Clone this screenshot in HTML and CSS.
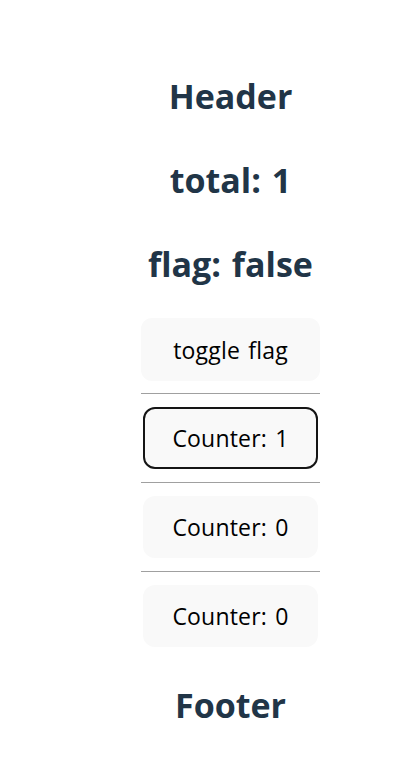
FILE: index.html
```html
<!DOCTYPE html>
<html lang="en">
<head>
<meta charset="utf-8">
<title>Demo</title>
<link rel="stylesheet" href="styles.css">
</head>
<body>
<div class="app">
  <h1 class="title title-header">Header</h1>
  <h1 class="title">total: 1</h1>
  <h1 class="title">flag: false</h1>
  <button class="btn btn-toggle">toggle flag</button>
  <hr class="sep">
  <button class="btn btn-counter is-active">Counter: 1</button>
  <hr class="sep">
  <button class="btn btn-counter">Counter: 0</button>
  <hr class="sep">
  <button class="btn btn-counter">Counter: 0</button>
  <h1 class="title title-footer">Footer</h1>
</div>
</body>
</html>
```
FILE: styles.css
```css
html, body {
  margin: 0;
  padding: 0;
  background: #ffffff;
}
body {
  font-family: "Open Sans", "Noto Sans", sans-serif;
}
.app {
  width: 179px;
  margin-left: 141px;
  padding-top: 74px;
  display: flex;
  flex-direction: column;
  text-align: center;
}
.title {
  margin: 0 0 40px 0;
  font-size: 34px;
  line-height: 44px;
  font-weight: 700;
  color: #213547;
  word-spacing: 2px;
}
.title:nth-of-type(3) {
  margin-bottom: 32px;
}
.title-footer {
  margin: 35px 0 0 0;
}
.btn {
  font-family: inherit;
  font-size: 23px;
  word-spacing: 2px;
  letter-spacing: 0.2px;
  color: #000;
  background: #f9f9f9;
  border: 2px solid transparent;
  border-radius: 11px;
  padding: 0;
  cursor: pointer;
}
.btn-toggle {
  width: 179px;
  height: 63px;
}
.btn-counter {
  width: 175px;
  height: 62px;
  margin: 1px auto;
  border-radius: 12px;
}
.btn-counter.is-active {
  border-color: #151515;
}
.sep {
  margin: 12px 0;
  height: 0;
  border: 0;
  border-top: 1px solid #a0a0a0;
}
```
